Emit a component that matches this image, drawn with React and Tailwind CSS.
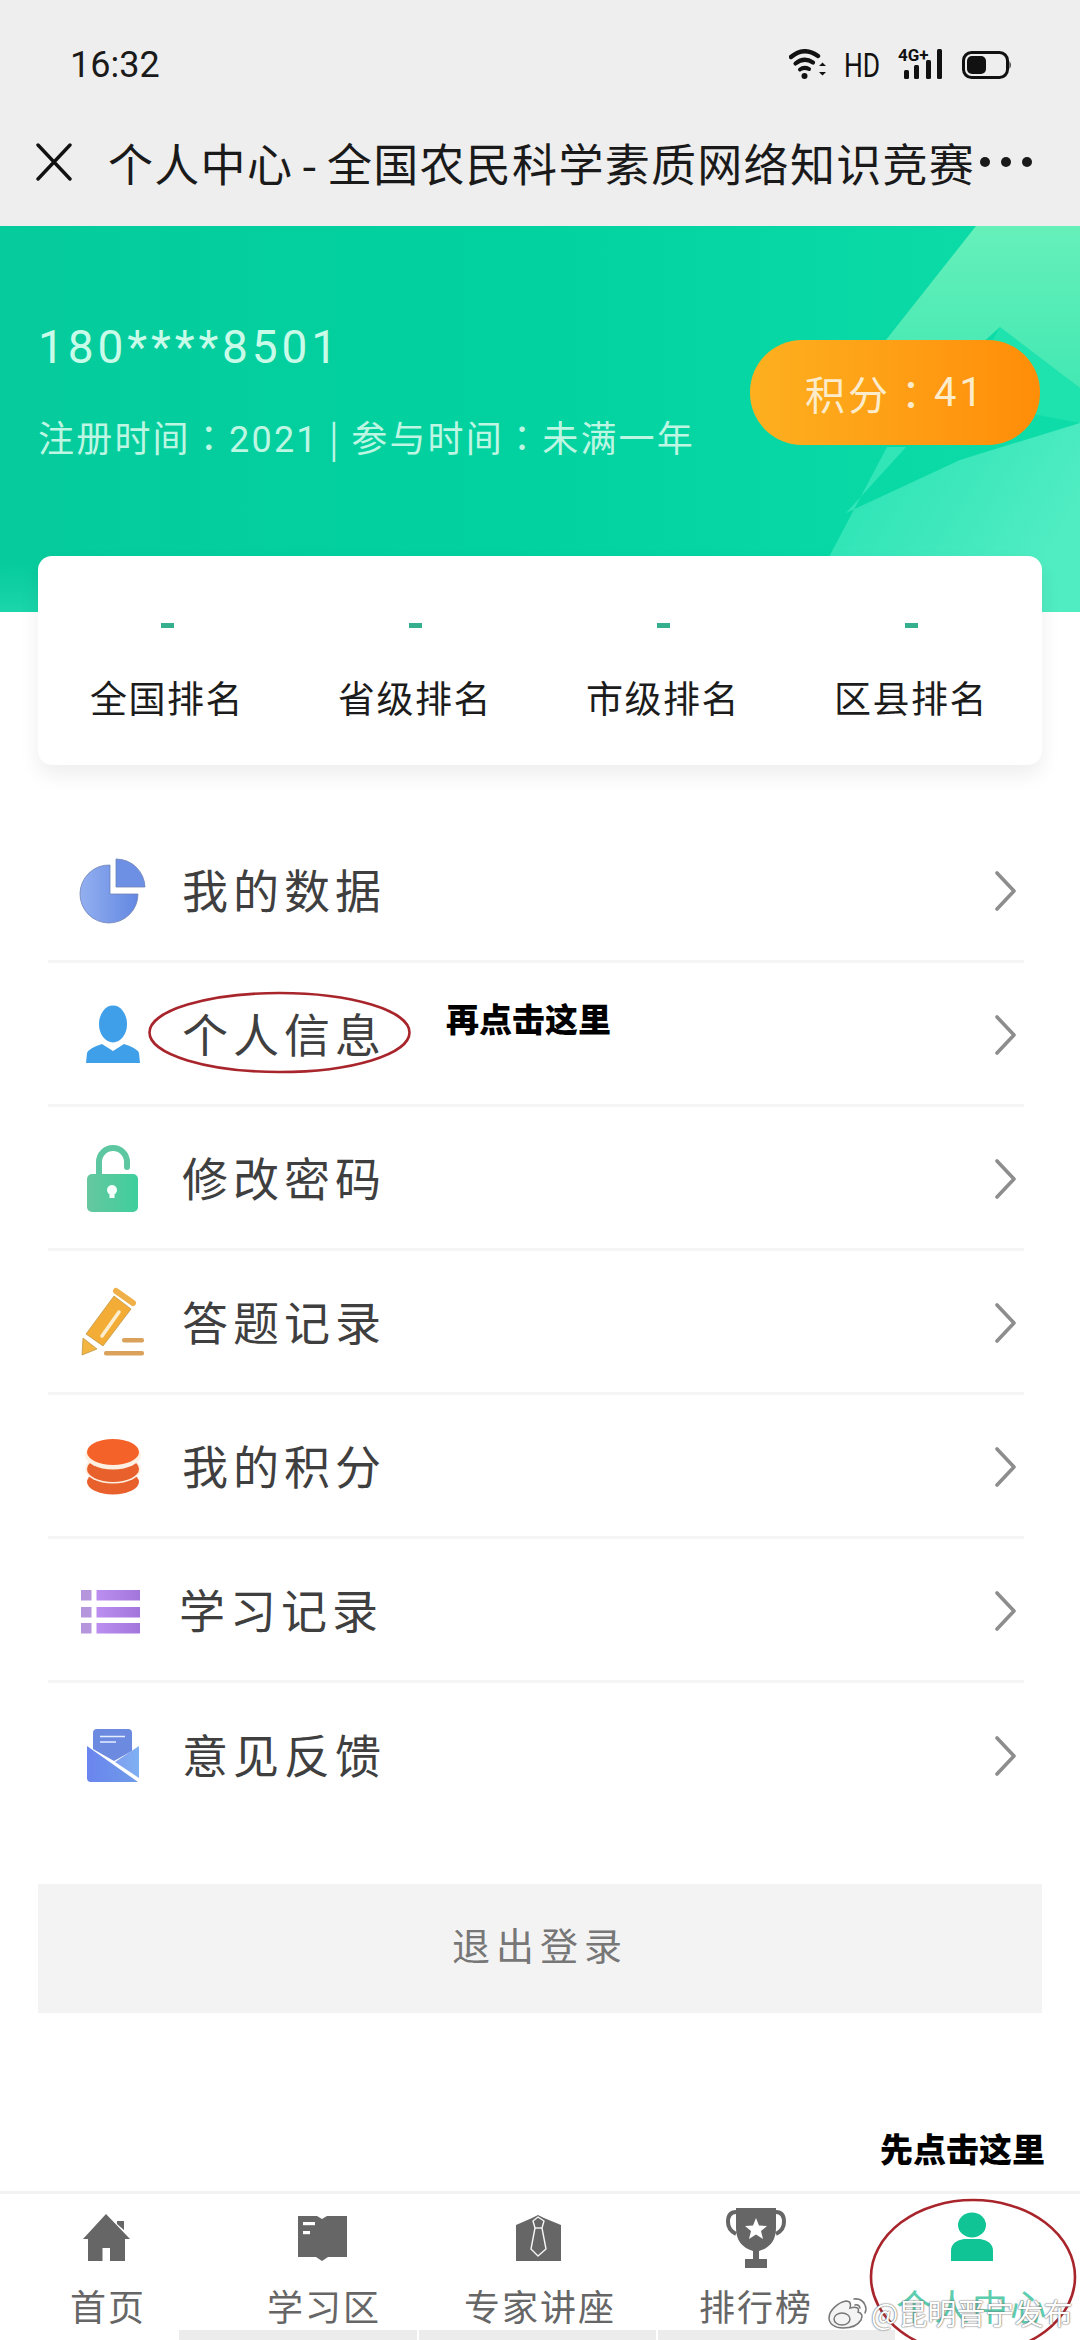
const font = "font-['Noto_Sans_CJK_SC','Noto_Sans',sans-serif]";

function Colon() {
  return <span className="font-['Noto_Sans_CJK_TC',sans-serif]">：</span>;
}

function Row({ label, children, last, shift }) {
  return (
    <div className={`flex items-center h-[144px] pb-[4px] ml-[48px] mr-[56px] ${last ? "" : "border-b-[3px] border-[#f5f5f5]"}`}>
      <div className="w-[78px] h-[78px] ml-[26px] shrink-0">{children}</div>
      <span className={`${shift ? "ml-[27px]" : "ml-[30px]"} text-[46px] leading-none tracking-[5px] text-[#3f3f3f] font-normal`}>{label}</span>
      <svg className="ml-auto mr-[6px] mt-[6px]" width="24" height="40" viewBox="0 0 24 40" fill="none" stroke="#8d8d8d" strokeWidth="3.6" strokeLinejoin="round" strokeLinecap="round">
        <path d="M3 2 L20 20 L3 38" />
      </svg>
    </div>
  );
}

const Pie = () => (
  <svg viewBox="74 850 78 78" width="78" height="78">
    <defs>
      <linearGradient id="p1" x1="0" x2="1"><stop offset="0" stopColor="#93aff0" /><stop offset="1" stopColor="#6388e2" /></linearGradient>
    </defs>
    <path d="M110 866 A29 29 0 1 0 138 895 L110 895 Z" fill="url(#p1)" stroke="#6d83b5" strokeWidth="0.8" />
    <path d="M116 860 A29 29 0 0 1 145 888 L116 888 Z" fill="#6d90e4" stroke="#6d83b5" strokeWidth="0.8" />
  </svg>
);
const Person = () => (
  <svg viewBox="74 994 78 78" width="78" height="78">
    <ellipse cx="113" cy="1025" rx="14" ry="18.5" fill="#3f9fe8" />
    <path d="M86 1064 L87 1054 Q89 1049 102 1045 L113 1052 L124 1045 Q137 1049 139 1054 L140 1064 Z" fill="#3f9fe8" />
  </svg>
);
const Lock = () => (
  <svg viewBox="74 1138 78 78" width="78" height="78">
    <defs>
      <linearGradient id="l1" x1="0" x2="1"><stop offset="0" stopColor="#66c79f" /><stop offset="1" stopColor="#3ecf9d" /></linearGradient>
    </defs>
    <path d="M99 1176 V1163 A14 14 0 0 1 127 1163 V1168" fill="none" stroke="#5cc7a0" strokeWidth="6" strokeLinecap="round" />
    <rect x="87" y="1175" width="51" height="38" rx="5" fill="url(#l1)" />
    <circle cx="112" cy="1191" r="5" fill="#f5fffb" />
    <rect x="109.5" y="1193" width="5" height="6" fill="#f5fffb" />
  </svg>
);
const Pen = () => (
  <svg viewBox="74 1282 78 78" width="78" height="78">
    <path d="M83 1339 L97 1350 L82 1356 Z" fill="#f3b440" stroke="#b89040" strokeWidth="0.7" />
    <path d="M86 1335 L114 1297 L131 1310 L103 1347 Z" fill="#f3ad37" stroke="#b89040" strokeWidth="0.7" />
    <path d="M116 1292 L133 1304" stroke="#efb04a" strokeWidth="6" strokeLinecap="round" />
    <path d="M119 1313 L102 1337" stroke="#fbeed0" strokeWidth="3.5" strokeLinecap="round" />
    <rect x="122" y="1339" width="22" height="4.5" rx="2" fill="#d9a15a" />
    <rect x="104" y="1352" width="40" height="4.5" rx="2" fill="#d9a15a" />
  </svg>
);
const Coins = () => (
  <svg viewBox="74 1426 78 78" width="78" height="78">
    <ellipse cx="113" cy="1483" rx="26" ry="12.5" fill="#e8602c" />
    <ellipse cx="113" cy="1470" rx="28" ry="14.5" fill="#fdf0e2" />
    <ellipse cx="113" cy="1470" rx="26" ry="13" fill="#e8602c" />
    <ellipse cx="113" cy="1456" rx="28" ry="14.5" fill="#fdf0e2" />
    <ellipse cx="113" cy="1453" rx="26" ry="13" fill="#f4622a" />
  </svg>
);
const List = () => (
  <svg viewBox="74 1570 78 78" width="78" height="78">
    <defs>
      <linearGradient id="li" x1="0" x2="1"><stop offset="0" stopColor="#bb8ef0" /><stop offset="1" stopColor="#a376dc" /></linearGradient>
    </defs>
    {[1591, 1608, 1624].map((y) => (
      <g key={y}>
        <rect x="81" y={y} width="10.5" height="10.5" fill="#b596dd" />
        <rect x="96.5" y={y} width="43.5" height="10.5" fill="url(#li)" />
      </g>
    ))}
  </svg>
);
const Mail = () => (
  <svg viewBox="74 1714 78 78" width="78" height="78">
    <defs>
      <linearGradient id="m1" x1="0" x2="1"><stop offset="0" stopColor="#6a85ef" /><stop offset="1" stopColor="#6f9be8" /></linearGradient>
      <linearGradient id="m2" x1="0" x2="1"><stop offset="0" stopColor="#7f9ff0" /><stop offset="1" stopColor="#7fb0f2" /></linearGradient>
    </defs>
    <path d="M93 1733 Q93 1729 97 1729 H128 Q132 1729 132 1733 V1751 L114 1761 L93 1749 Z" fill="#6c8ae0" />
    <path d="M100 1736.5 H125 M100 1742 H116" stroke="#e6edff" strokeWidth="1.6" />
    <path d="M87 1746 L138 1782 H91 Q87 1782 87 1778 Z" fill="url(#m1)" />
    <path d="M139 1746 V1778 L115 1762 Z" fill="url(#m2)" />
  </svg>
);

function Tab({ label, active, children }) {
  return (
    <div className="flex flex-col items-center">
      <svg viewBox="0 0 64 64" width="64" height="64" className="mt-[14px]">{children}</svg>
      <span className={`mt-[13px] text-[36px] leading-[40px] tracking-[2px] font-normal ${active ? "text-[#5ccdae]" : "text-[#666666]"}`}>{label}</span>
    </div>
  );
}

export default function App() {
  return (
    <div className={`${font} relative w-[1080px] h-[2340px] overflow-hidden bg-white flex flex-col`}>
      {/* phone + browser chrome */}
      <header className="h-[226px] bg-[#eeeeee] shrink-0">
        <div className="h-[130px] flex items-center pl-[70px] pr-[68px]">
          <span className="font-['Roboto',sans-serif] text-[36px] leading-none text-[#1a1a1a]">16:32</span>
          <div className="ml-auto flex items-center">
            <svg width="38" height="32" viewBox="0 0 38 32" fill="none" stroke="#111" strokeLinecap="round">
              <path d="M2 8 Q15 -3 29 7" strokeWidth="4.4" />
              <path d="M6.5 14.5 Q15 7.5 24 13.5" strokeWidth="4.2" />
              <path d="M11 20.5 Q15 17.5 20 20" strokeWidth="4" />
              <circle cx="15.5" cy="27" r="3" fill="#111" stroke="none" />
              <path d="M30 17 l3.5 -3.5 l3.5 3.5 Z M30 23 l3.5 3.5 l3.5 -3.5 Z" fill="#111" stroke="none" />
            </svg>
            <span className="ml-[17px] w-[35px] font-['Roboto',sans-serif] text-[33px] leading-none text-[#111] origin-left scale-x-[0.8] font-normal">HD</span>
            <div className="relative ml-[19px] w-[44px] h-[32px]">
              <span className="absolute left-0 top-[-3px] font-['Roboto',sans-serif] text-[17px] leading-[18px] font-bold text-[#111] whitespace-nowrap">4G+</span>
              <svg width="44" height="32" viewBox="0 0 44 32" className="absolute left-0 top-0" fill="#111">
                <rect x="6" y="21" width="5" height="9" rx="1.5" />
                <rect x="16" y="16" width="5" height="14" rx="1.5" />
                <rect x="28" y="11" width="5" height="19" rx="1.5" />
                <rect x="39" y="0" width="5" height="30" rx="1.5" />
              </svg>
            </div>
            <svg className="ml-[20px]" width="50" height="28" viewBox="0 0 50 28">
              <rect x="1.5" y="1.5" width="44" height="25" rx="8" fill="none" stroke="#111" strokeWidth="3" />
              <rect x="5" y="5" width="19" height="18" rx="5" fill="#111" />
              <path d="M47.5 10 Q50 14 47.5 18 Z" fill="#111" />
            </svg>
          </div>
        </div>
        <div className="h-[64px] flex items-center pl-[36px] text-[#1a1a1a]">
          <svg width="36" height="38" viewBox="0 0 36 38" stroke="#111" strokeWidth="3.4" strokeLinecap="round">
            <path d="M2 2 L34 36 M34 2 L2 36" />
          </svg>
          <span className="ml-[36px] w-[862px] text-[45px] leading-none tracking-[1.3px] [word-spacing:-3px] whitespace-nowrap">个人中心 - 全国农民科学素质网络知识竞赛</span>
          <div className="ml-[10px] flex gap-[11px]">
            <span className="w-[10px] h-[10px] rounded-full bg-[#1a1a1a]" />
            <span className="w-[10px] h-[10px] rounded-full bg-[#1a1a1a]" />
            <span className="w-[10px] h-[10px] rounded-full bg-[#1a1a1a]" />
          </div>
        </div>
      </header>

      {/* green banner */}
      <section className="relative h-[386px] shrink-0 bg-gradient-to-r from-[#06cb9c] via-[#01d2a0] to-[#0edda9] overflow-hidden">
        <svg className="absolute inset-0" width="1080" height="386" viewBox="0 226 1080 386">
          <defs>
            <linearGradient id="g1" x1="0" x2="0" y1="0" y2="1"><stop offset="0" stopColor="#66f0ba" /><stop offset="1" stopColor="#43e8b3" /></linearGradient>
            <linearGradient id="g2" x1="0" x2="1" y1="0" y2="0.4"><stop offset="0" stopColor="#22e2b2" /><stop offset="1" stopColor="#50ecc2" /></linearGradient>
          </defs>
          <path d="M1000 327 L1080 388 V423 L960 400 Z" fill="#1fe3ae" />
          <path d="M976 226 H1080 V388 L1000 327 L980 345 H882 Z" fill="url(#g1)" />
          <path d="M887 447 L906 447 L846 513 L960 460 L1080 423 V612 H800 Z" fill="url(#g2)" />
        </svg>
        <div className="absolute left-0 w-[800px] bottom-0 h-[50px] bg-gradient-to-b from-transparent to-[#2fe0b8]/50" />
        <div className="relative flex items-start pl-[38px] pr-[40px]">
          <div className="pt-[98px]">
            <div className="font-['Roboto',sans-serif] font-normal text-[46px] leading-none tracking-[3.9px] text-[#c9fbe9]">180****8501</div>
            <div className="mt-[48px] text-[36px] leading-none tracking-[2.2px] text-[#bdf6e2] font-normal whitespace-nowrap">注册时间<Colon /><span className="font-['Roboto',sans-serif]">2021</span> | 参与时间<Colon />未满一年</div>
          </div>
          <div className="ml-auto mt-[114px] w-[290px] h-[105px] rounded-[52px] bg-gradient-to-r from-[#fdb01f] to-[#ff8d07] flex items-center justify-center text-[40px] leading-none tracking-[3px] text-[#fdeccb] font-normal">积分<Colon /><span className="font-['Roboto',sans-serif]">41</span></div>
        </div>
      </section>

      {/* ranks card */}
      <section className="relative mt-[-56px] mx-[38px] h-[209px] shrink-0 bg-white rounded-[14px] shadow-[0_10px_20px_rgba(0,0,0,0.07)] grid grid-cols-4 pl-[5px] pr-[7px]">
        {["全国排名", "省级排名", "市级排名", "区县排名"].map((t) => (
          <div key={t} className="flex flex-col items-center">
            <span className="mt-[67px] w-[13px] h-[5px] bg-[#35b08e]" />
            <span className="mt-[51px] text-[37px] leading-none tracking-[1.5px] text-[#1c1c1c] font-normal whitespace-nowrap">{t}</span>
          </div>
        ))}
      </section>

      {/* menu */}
      <section className="mt-[54px] shrink-0">
        <Row label="我的数据"><Pie /></Row>
        <Row label="个人信息"><Person /></Row>
        <Row label="修改密码"><Lock /></Row>
        <Row label="答题记录"><Pen /></Row>
        <Row label="我的积分"><Coins /></Row>
        <Row label="学习记录" shift><List /></Row>
        <Row label="意见反馈" last><Mail /></Row>
      </section>

      <button className="mt-[57px] mx-[38px] h-[129px] pb-[9px] shrink-0 bg-[#f3f3f3] text-[38px] leading-none tracking-[6px] text-[#777777] font-normal">退出登录</button>

      {/* tab bar */}
      <nav className="mt-auto h-[139px] shrink-0 border-t-[3px] border-[#f2f2f2] grid grid-cols-5 overflow-hidden">
        <Tab label="首页">
          <path d="M41 13 H48 V22 L41 16 Z" fill="#666" />
          <path d="M30 6 L54 31 H49 V53 H34 V40 H26.5 V53 H12 V31 H7 Z" fill="#666" />
        </Tab>
        <Tab label="学习区">
          <path d="M6 8 H25 L30 11 L35 8 H55 V49 H36 L30 53 L24 49 H6 Z" fill="#666" />
          <rect x="11" y="14" width="12" height="3.2" fill="#fff" />
          <rect x="11" y="23" width="7" height="3.2" fill="#fff" />
        </Tab>
        <Tab label="专家讲座">
          <path d="M8 17 L24 10 L30 7 L36 10 L53 17 V53 H8 Z" fill="#666" />
          <path d="M30 9 L36 13 L34 20 L38 41 L30 48 L23 41 L27 20 L25 13 Z" fill="#666" stroke="#f6f6f6" strokeWidth="1.4" strokeLinejoin="round" />
          <path d="M27 20 H34" stroke="#f6f6f6" strokeWidth="1.4" />
        </Tab>
        <Tab label="排行榜">
          <path d="M12 -1 H52 V20 Q52 38 35 43 V51 H43 V60 H21 V51 H29 V43 Q12 38 12 20 Z" fill="#666" />
          <path d="M12 4 Q4 4 4 14 Q4 22 12 26 M52 4 Q60 4 60 14 Q60 22 52 26" fill="none" stroke="#666" strokeWidth="4" />
          <path d="M32 10 L35 17.5 L43 18 L37 23 L39 31 L32 26.5 L25 31 L27 23 L21 18 L29 17.5 Z" fill="#fff" />
        </Tab>
        <Tab label="个人中心" active>
          <ellipse cx="32" cy="17" rx="14" ry="12.5" fill="#10c495" />
          <path d="M11 53 V43 Q11 33 24 31 H40 Q53 33 53 43 V53 Z" fill="#10c495" />
        </Tab>
      </nav>
      <div className="h-[10px] shrink-0 ml-[179px] w-[716px] bg-[#ececec] flex">
        <span className="w-[240px] border-r-2 border-white" />
        <span className="w-[239px] border-r-2 border-white" />
      </div>

      {/* hand-drawn annotations on top of the screenshot */}
      <svg className="absolute inset-0 pointer-events-none" width="1080" height="2340" viewBox="0 0 1080 2340" fill="none" stroke="#a9252c" strokeWidth="2.6">
        <ellipse cx="279.5" cy="1032.5" rx="130" ry="39.5" />
        <ellipse cx="973" cy="2277" rx="102" ry="77" />
      </svg>
      <span className="absolute left-[446px] top-[1000px] text-[33px] leading-[36px] font-black text-black whitespace-nowrap">再点击这里</span>
      <span className="absolute left-[880px] top-[2130px] text-[33px] leading-[36px] font-black text-black whitespace-nowrap">先点击这里</span>

      {/* watermark */}
      <div className="absolute left-[826px] top-[2295px] flex items-center">
        <svg width="44" height="34" viewBox="0 0 44 34" fill="#f4f4f4" stroke="#777" strokeWidth="1.5">
          <path d="M3 23 C3 15 13 7 20 6 C25 6 25 10 24 13 C30 11 34 13 32 17 C36 18 37 21 35 25 C32 30 25 33 17 33 C9 33 3 29 3 23 Z" />
          <ellipse cx="16" cy="24" rx="8" ry="6" fill="none" />
          <path d="M28 4 Q36 3 39 10 Q41 14 39 18 M29 10 Q33 9 34 13" fill="none" strokeLinecap="round" />
        </svg>
        <span className="ml-[1px] text-[29px] leading-none text-white whitespace-nowrap [text-shadow:0_0_2px_#666,0_0_1px_#666]">@昆明晋宁发布</span>
      </div>
    </div>
  );
}
